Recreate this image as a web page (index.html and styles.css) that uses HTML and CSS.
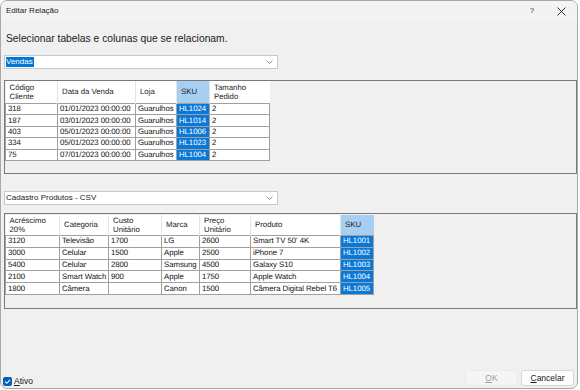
FILE: index.html
```html
<!DOCTYPE html>
<html lang="pt">
<head>
<meta charset="utf-8">
<link rel="stylesheet" href="styles.css">
</head>
<body>
<div class="window">
  <div class="titlebar">
    <span class="title">Editar Relação</span>
    <span class="tb-help">?</span>
    <span class="tb-close"><svg width="9" height="9" viewBox="0 0 9 9"><path d="M0.5 0.5 L8.5 8.5 M8.5 0.5 L0.5 8.5" stroke="#1a1a1a" stroke-width="0.9" fill="none"/></svg></span>
  </div>
  <div class="content">
    <div class="prompt">Selecionar tabelas e colunas que se relacionam.</div>
    <div class="combo combo-first">
      <span class="combo-text sel">Vendas</span>
      <svg class="chev" width="7" height="4" viewBox="0 0 7 4"><path d="M0.5 0.5 L3.5 3.5 L6.5 0.5" stroke="#8a8a8a" stroke-width="0.9" fill="none"/></svg>
    </div>
    <div class="grid grid1">
      <table class="dgv t1">
        <colgroup><col style="width:52px"><col style="width:78px"><col style="width:41px"><col style="width:33px"><col style="width:60px"></colgroup>
        <thead>
          <tr><th>Código<br>Cliente</th><th>Data da Venda</th><th>Loja</th><th class="hsel">SKU</th><th>Tamanho<br>Pedido</th></tr>
        </thead>
        <tbody>
          <tr><td>318</td><td>01/01/2023 00:00:00</td><td>Guarulhos</td><td class="sel">HL1024</td><td>2</td></tr>
          <tr><td>187</td><td>03/01/2023 00:00:00</td><td>Guarulhos</td><td class="sel">HL1014</td><td>2</td></tr>
          <tr><td>403</td><td>05/01/2023 00:00:00</td><td>Guarulhos</td><td class="sel">HL1006</td><td>2</td></tr>
          <tr><td>334</td><td>05/01/2023 00:00:00</td><td>Guarulhos</td><td class="sel">HL1023</td><td>2</td></tr>
          <tr><td>75</td><td>07/01/2023 00:00:00</td><td>Guarulhos</td><td class="sel">HL1004</td><td>2</td></tr>
        </tbody>
      </table>
    </div>
    <div class="combo combo-second">
      <span class="combo-text">Cadastro Produtos - CSV</span>
      <svg class="chev" width="7" height="4" viewBox="0 0 7 4"><path d="M0.5 0.5 L3.5 3.5 L6.5 0.5" stroke="#8a8a8a" stroke-width="0.9" fill="none"/></svg>
    </div>
    <div class="grid grid2">
      <table class="dgv t2">
        <colgroup><col style="width:54px"><col style="width:49px"><col style="width:53px"><col style="width:38px"><col style="width:51px"><col style="width:90px"><col style="width:33px"></colgroup>
        <thead>
          <tr><th>Acréscimo<br>20%</th><th>Categoria</th><th>Custo<br>Unitário</th><th>Marca</th><th>Preço<br>Unitário</th><th>Produto</th><th class="hsel">SKU</th></tr>
        </thead>
        <tbody>
          <tr><td>3120</td><td>Televisão</td><td>1700</td><td>LG</td><td>2600</td><td>Smart TV 50' 4K</td><td class="sel">HL1001</td></tr>
          <tr><td>3000</td><td>Celular</td><td>1500</td><td>Apple</td><td>2500</td><td>iPhone 7</td><td class="sel">HL1002</td></tr>
          <tr><td>5400</td><td>Celular</td><td>2800</td><td>Samsung</td><td>4500</td><td>Galaxy S10</td><td class="sel">HL1003</td></tr>
          <tr><td>2100</td><td>Smart Watch</td><td>900</td><td>Apple</td><td>1750</td><td>Apple Watch</td><td class="sel">HL1004</td></tr>
          <tr><td>1800</td><td>Câmera</td><td></td><td>Canon</td><td>1500</td><td>Câmera Digital Rebel T6</td><td class="sel">HL1005</td></tr>
        </tbody>
      </table>
    </div>
    <div class="footer">
      <label class="check">
        <span class="box"><svg width="9" height="9" viewBox="0 0 9 9"><path d="M2 4.6 L3.8 6.3 L7 2.8" stroke="#fff" stroke-width="1.1" fill="none"/></svg></span>
        <span class="check-label"><u>A</u>tivo</span>
      </label>
      <div class="buttons">
        <span class="btn btn-disabled"><u>O</u>K</span>
        <span class="btn"><u>C</u>ancelar</span>
      </div>
    </div>
  </div>
</div>
</body>
</html>
```

FILE: styles.css
```css
html, body {
  margin: 0;
  padding: 0;
  background: #ffffff;
}
body {
  width: 580px;
  height: 390px;
  font-family: "Liberation Sans", Arial, sans-serif;
  color: #1a1a1a;
}
.window {
  box-sizing: border-box;
  width: 578px;
  height: 389px;
  border: 1px solid #a8a8a8;
  border-radius: 7px;
  background: #f0f0f0;
  overflow: hidden;
  display: flex;
  flex-direction: column;
}
.titlebar {
  height: 21px;
  flex: none;
  display: flex;
  align-items: flex-start;
  background: #f3f3f3;
  padding-left: 5px;
  padding-top: 5px;
  box-sizing: border-box;
}
.title {
  font-size: 8px;
  line-height: 10px;
  color: #1a1a1a;
  flex: 1;
}
.tb-help {
  font-size: 8px;
  line-height: 10px;
  color: #333;
  width: 20px;
  text-align: center;
  margin-right: 6px;
}
.tb-close {
  width: 26px;
  height: 10px;
  display: flex;
  justify-content: center;
  align-items: center;
  margin-right: 3px;
}
.content {
  flex: 1;
  display: flex;
  flex-direction: column;
  padding: 0 0 0 3px;
}
.prompt {
  font-size: 10.3px;
  color: #1a1a1a;
  margin-top: 10px;
  margin-left: 2px;
  height: 13px;
  line-height: 13px;
}
.combo {
  box-sizing: border-box;
  width: 274px;
  height: 14px;
  background: #ffffff;
  border: 1px solid #c8c8c8;
  display: flex;
  align-items: center;
  padding-left: 1px;
  font-size: 8px;
}
.combo-first { margin-top: 10px; }
.combo-second { margin-top: 17px; }
.combo-text {
  flex: 1;
  line-height: 10px;
}
.combo-text.sel {
  flex: none;
  background: #0078d7;
  color: #fff;
  padding-right: 1px;
  margin-right: auto;
}
.chev { margin-right: 4px; }
.grid {
  box-sizing: border-box;
  width: 573px;
  background: #f0f0f0;
  border: 1px solid #7a7a7a;
}
.grid1 {
  margin-top: 11px;
  height: 94px;
}
.grid2 {
  margin-top: 8px;
  height: 96px;
  padding-top: 1px;
}
.dgv {
  border-collapse: collapse;
  table-layout: fixed;
  font-size: 7.8px;
  color: #111;
  text-rendering: geometricPrecision;
}
.dgv th {
  background: #ffffff;
  font-weight: normal;
  text-align: left;
  vertical-align: middle;
  padding: 0 1px 0 4px;
  line-height: 9.5px;
  height: 22px;
  color: #222;
  border-left: 1px solid #e4e4e4;
  white-space: nowrap;
  overflow: hidden;
}
.dgv th:first-child { border-left: none; }
.t2 th { height: 20px; }
.dgv th.hsel { background: #a6cff2; }
.dgv td {
  background: #ffffff;
  border: 1px solid #a0a0a0;
  padding: 0 0 0 2px;
  height: 10.4px;
  line-height: 10px;
  white-space: nowrap;
  overflow: hidden;
  letter-spacing: -0.05px;
}
.t2 td { height: 10.8px; }
.dgv td.sel {
  background: #0a78d7;
  color: #ffffff;
}
.footer {
  margin-top: auto;
  display: flex;
  align-items: flex-end;
  margin-bottom: 2px;
}
.check {
  display: flex;
  align-items: center;
  margin-left: -1px;
  font-size: 8.5px;
  line-height: 10px;
}
.box {
  width: 9px;
  height: 9px;
  background: #005fb8;
  border-radius: 2px;
  display: flex;
}
.check-label {
  margin-left: 2px;
}
.buttons {
  margin-left: auto;
  display: flex;
  gap: 3px;
  margin-right: 3px;
}
.btn {
  box-sizing: border-box;
  width: 53px;
  height: 16px;
  background: #fdfdfd;
  border: 1px solid #d6d6d6;
  border-radius: 3px;
  font-size: 8.5px;
  display: flex;
  align-items: center;
  justify-content: center;
  color: #1a1a1a;
}
.btn-disabled {
  background: #f5f5f5;
  border-color: #ececec;
  color: #9a9a9a;
}
```
